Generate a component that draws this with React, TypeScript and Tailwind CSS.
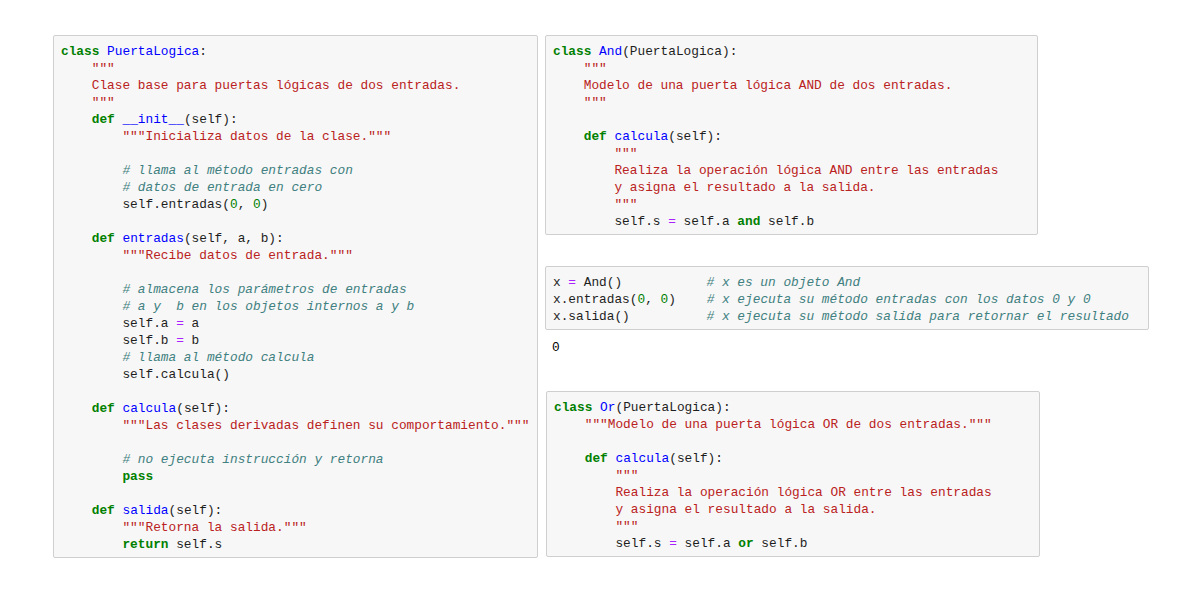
import React from 'react';

const K = ({ children }: { children: React.ReactNode }) => (
  <span className="font-bold text-[#008000]">{children}</span>
);
const N = ({ children }: { children: React.ReactNode }) => (
  <span className="text-[#0000ff]">{children}</span>
);
const S = ({ children }: { children: React.ReactNode }) => (
  <span className="text-[#ba2121]">{children}</span>
);
const C = ({ children }: { children: React.ReactNode }) => (
  <span className="italic text-[#408080]">{children}</span>
);
const O = ({ children }: { children: React.ReactNode }) => (
  <span className="text-[#aa22ff]">{children}</span>
);
const M = ({ children }: { children: React.ReactNode }) => (
  <span className="text-[#008000]">{children}</span>
);

const Cell = ({ className = '', children }: { className?: string; children: React.ReactNode }) => (
  <div
    className={`rounded-[2px] border border-[#cfcfcf] bg-[#f7f7f7] px-[7px] pt-[7px] pb-[4px] ${className}`}
  >
    <pre className="m-0 whitespace-pre font-['Liberation_Mono',monospace] text-[12.8px] leading-[17px] text-[#1e1e1e]">
      {children}
    </pre>
  </div>
);

export default function App() {
  return (
    <div className="min-h-[600px] bg-white pl-[53px] pt-[35px]">
      <div className="flex items-start gap-[7px]">
        <Cell className="w-[485px]">
          <K>class</K> <N>PuertaLogica</N>:{'\n'}
          {'    '}<S>"""</S>{'\n'}
          {'    '}<S>Clase base para puertas lógicas de dos entradas.</S>{'\n'}
          {'    '}<S>"""</S>{'\n'}
          {'    '}<K>def</K> <N>__init__</N>(self):{'\n'}
          {'        '}<S>"""Inicializa datos de la clase."""</S>{'\n'}
          {'\n'}
          {'        '}<C># llama al método entradas con</C>{'\n'}
          {'        '}<C># datos de entrada en cero</C>{'\n'}
          {'        '}self.entradas(<M>0</M>, <M>0</M>){'\n'}
          {'\n'}
          {'    '}<K>def</K> <N>entradas</N>(self, a, b):{'\n'}
          {'        '}<S>"""Recibe datos de entrada."""</S>{'\n'}
          {'\n'}
          {'        '}<C># almacena los parámetros de entradas</C>{'\n'}
          {'        '}<C># a y  b en los objetos internos a y b</C>{'\n'}
          {'        '}self.a <O>=</O> a{'\n'}
          {'        '}self.b <O>=</O> b{'\n'}
          {'        '}<C># llama al método calcula</C>{'\n'}
          {'        '}self.calcula(){'\n'}
          {'\n'}
          {'    '}<K>def</K> <N>calcula</N>(self):{'\n'}
          {'        '}<S>"""Las clases derivadas definen su comportamiento."""</S>{'\n'}
          {'\n'}
          {'        '}<C># no ejecuta instrucción y retorna</C>{'\n'}
          {'        '}<K>pass</K>{'\n'}
          {'\n'}
          {'    '}<K>def</K> <N>salida</N>(self):{'\n'}
          {'        '}<S>"""Retorna la salida."""</S>{'\n'}
          {'        '}<K>return</K> self.s
        </Cell>

        <div className="flex w-[604px] flex-col">
          <Cell className="w-[493px]">
            <K>class</K> <N>And</N>(PuertaLogica):{'\n'}
            {'    '}<S>"""</S>{'\n'}
            {'    '}<S>Modelo de una puerta lógica AND de dos entradas.</S>{'\n'}
            {'    '}<S>"""</S>{'\n'}
            {'\n'}
            {'    '}<K>def</K> <N>calcula</N>(self):{'\n'}
            {'        '}<S>"""</S>{'\n'}
            {'        '}<S>Realiza la operación lógica AND entre las entradas</S>{'\n'}
            {'        '}<S>y asigna el resultado a la salida.</S>{'\n'}
            {'        '}<S>"""</S>{'\n'}
            {'        '}self.s <O>=</O> self.a <K>and</K> self.b
          </Cell>

          <Cell className="mt-[31px] w-full">
            x <O>=</O> And(){'           '}<C># x es un objeto And</C>{'\n'}
            x.entradas(<M>0</M>, <M>0</M>){'    '}<C># x ejecuta su método entradas con los datos 0 y 0</C>{'\n'}
            x.salida(){'          '}<C># x ejecuta su método salida para retornar el resultado</C>
          </Cell>

          <pre className="m-0 mt-[9px] pl-[7px] font-['Liberation_Mono',monospace] text-[12.8px] leading-[17px] text-black">
            0
          </pre>

          <Cell className="ml-[1px] mt-[35px] w-[494px]">
            <K>class</K> <N>Or</N>(PuertaLogica):{'\n'}
            {'    '}<S>"""Modelo de una puerta lógica OR de dos entradas."""</S>{'\n'}
            {'\n'}
            {'    '}<K>def</K> <N>calcula</N>(self):{'\n'}
            {'        '}<S>"""</S>{'\n'}
            {'        '}<S>Realiza la operación lógica OR entre las entradas</S>{'\n'}
            {'        '}<S>y asigna el resultado a la salida.</S>{'\n'}
            {'        '}<S>"""</S>{'\n'}
            {'        '}self.s <O>=</O> self.a <K>or</K> self.b
          </Cell>
        </div>
      </div>
    </div>
  );
}
